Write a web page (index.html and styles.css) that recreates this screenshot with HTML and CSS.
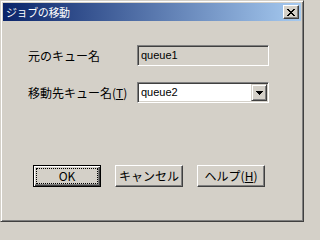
FILE: index.html
```html
<!DOCTYPE html>
<html lang="ja">
<head>
<meta charset="utf-8">
<title>ジョブの移動</title>
<link rel="stylesheet" href="styles.css">
</head>
<body>
<div class="window">
  <div class="titlebar">
    <span class="title">ジョブの移動</span>
    <span class="close">
      <svg width="8" height="7" viewBox="0 0 8 7" shape-rendering="crispEdges">
        <path d="M0 0h2v1H0zM6 0h2v1H6zM1 1h2v1H1zM5 1h2v1H5zM2 2h4v1H2zM3 3h2v1H3zM2 4h4v1H2zM1 5h2v1H1zM5 5h2v1H5zM0 6h2v1H0zM6 6h2v1H6z" fill="#000"/>
      </svg>
    </span>
  </div>
  <div class="content">
    <div class="form">
      <span class="label">元のキュー名</span>
      <div class="field readonly"><span class="value">queue1</span></div>
      <span class="label">移動先キュー名(<u>T</u>)</span>
      <div class="field combo">
        <span class="value">queue2</span>
        <span class="drop">
          <svg width="7" height="4" viewBox="0 0 7 4" shape-rendering="crispEdges"><path d="M0 0h7v1H0zM1 1h5v1H1zM2 2h3v1H2zM3 3h1v1H3z" fill="#000"/></svg>
        </span>
      </div>
    </div>
    <div class="buttons">
      <button class="btn default"><span class="focus">OK</span></button>
      <button class="btn"><span class="inner">キャンセル</span></button>
      <button class="btn"><span class="inner">ヘルプ(<u>H</u>)</span></button>
    </div>
  </div>
</div>
</body>
</html>
```
FILE: styles.css
```css
html, body {
  margin: 0;
  padding: 0;
  background: #d4d0c8;
}
.window {
  width: 304px;
  height: 222px;
  box-sizing: border-box;
  background: #d4d0c8;
  border: 1px solid;
  border-color: #d4d0c8 #404040 #404040 #d4d0c8;
  box-shadow: inset 1px 1px #fff, inset -1px -1px #808080;
  padding: 2px;
  display: flex;
  flex-direction: column;
  font-family: "Noto Sans CJK JP", sans-serif;
  font-size: 12px;
  color: #000;
}
.titlebar {
  height: 18px;
  flex: none;
  display: flex;
  align-items: center;
  justify-content: space-between;
  background: linear-gradient(to right, #0a246a, #a6caf0);
  padding: 0 2px 0 3px;
}
.title {
  color: #fff;
  font-size: 11px;
  letter-spacing: -0.4px;
  line-height: 1;
}
.close {
  width: 16px;
  height: 14px;
  box-sizing: border-box;
  background: #d4d0c8;
  border: 1px solid;
  border-color: #fff #404040 #404040 #fff;
  box-shadow: inset -1px -1px #808080;
  display: flex;
  align-items: center;
  justify-content: center;
}
.content {
  flex: 1;
  padding: 24px 0 0 25px;
}
.form {
  display: grid;
  grid-template-columns: 109px 132px;
  grid-auto-rows: 21px;
  row-gap: 16px;
  align-items: center;
}
.label {
  line-height: 1;
  white-space: nowrap;
}
.field {
  height: 21px;
  box-sizing: border-box;
  border: 1px solid;
  border-color: #808080 #fff #fff #808080;
  box-shadow: inset 1px 1px #404040, inset -1px -1px #d4d0c8;
  padding: 1px 1px 1px 3px;
  display: flex;
  align-items: center;
  font-family: "Liberation Sans", sans-serif;
  font-size: 11px;
  color: #000;
}
.readonly {
  background: #d4d0c8;
}
.combo {
  background: #fff;
}
.value {
  flex: 1;
  line-height: 1;
}
.drop {
  width: 16px;
  height: 17px;
  box-sizing: border-box;
  background: #d4d0c8;
  border: 1px solid;
  border-color: #d4d0c8 #404040 #404040 #d4d0c8;
  box-shadow: inset 1px 1px #fff, inset -1px -1px #808080;
  display: flex;
  align-items: center;
  justify-content: center;
}
.buttons {
  display: flex;
  gap: 14px;
  margin-top: 62px;
  padding-left: 5px;
}
.btn {
  width: 68px;
  height: 22px;
  box-sizing: border-box;
  margin: 0;
  padding: 0;
  background: #d4d0c8;
  border: 1px solid;
  border-color: #fff #404040 #404040 #fff;
  box-shadow: inset -1px -1px #808080, inset 1px 1px #d4d0c8;
  font-family: "Noto Sans CJK JP", sans-serif;
  font-size: 12px;
  color: #000;
  display: flex;
  align-items: stretch;
}
.btn.default {
  border: 1px solid #000;
  box-shadow: inset 1px 1px #fff, inset -1px -1px #404040, inset -2px -2px #808080;
  padding: 2px;
}
.inner, .focus {
  flex: 1;
  display: flex;
  align-items: center;
  justify-content: center;
  line-height: 1;
}
.focus {
  border: 1px dotted #000;
}
u {
  text-decoration: underline;
  text-underline-offset: 1px;
}
```
